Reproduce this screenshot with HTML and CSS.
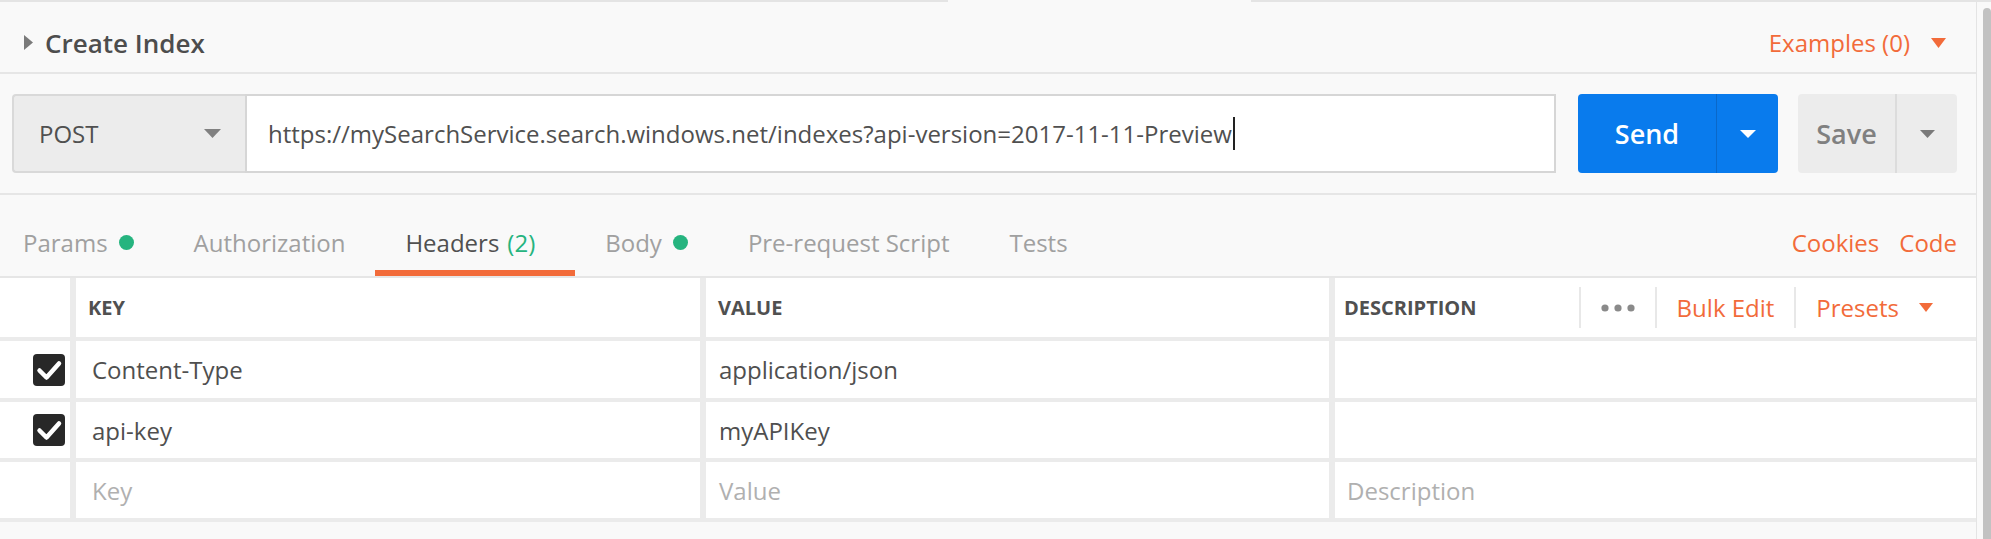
FILE: index.html
```html
<!DOCTYPE html>
<html>
<head>
<meta charset="utf-8">
<link rel="stylesheet" href="styles.css">
</head>
<body>
<div class="topline"><span class="seg seg-a"></span><span class="seg seg-gap"></span><span class="seg seg-b"></span></div>
<div class="layout">
  <div class="main">
    <div class="titlebar">
      <div class="title">
        <svg class="tri-right" width="9" height="15" viewBox="0 0 9 15"><path d="M0 0 L9 7.5 L0 15 Z" fill="#7a7a7a"/></svg>
        <span>Create Index</span>
      </div>
      <div class="examples">
        <span>Examples (0)</span>
        <svg width="15" height="10" viewBox="0 0 15 10"><path d="M0 0 H15 L7.5 10 Z" fill="#f26b3a"/></svg>
      </div>
    </div>

    <div class="request">
      <div class="method">
        <span>POST</span>
        <svg width="17" height="9" viewBox="0 0 17 9"><path d="M0 0 H17 L8.5 9 Z" fill="#808080"/></svg>
      </div>
      <div class="url"><span>https://mySearchService.search.windows.net/indexes?api-version=2017-11-11-Preview</span><span class="caret"></span></div>
      <div class="send">
        <span class="send-main">Send</span>
        <span class="send-drop"><svg width="16" height="8" viewBox="0 0 16 8"><path d="M0 0 H16 L8 8 Z" fill="#ffffff"/></svg></span>
      </div>
      <div class="save">
        <span class="save-main">Save</span>
        <span class="save-drop"><svg width="15" height="8" viewBox="0 0 15 8"><path d="M0 0 H15 L7.5 8 Z" fill="#7a7a7a"/></svg></span>
      </div>
    </div>

    <div class="tabs">
      <div class="tab-list">
        <div class="tab">Params<span class="dot"></span></div>
        <div class="tab">Authorization</div>
        <div class="tab active">Headers<span class="count">(2)</span></div>
        <div class="tab">Body<span class="dot"></span></div>
        <div class="tab">Pre-request Script</div>
        <div class="tab">Tests</div>
      </div>
      <div class="tab-links">
        <span>Cookies</span>
        <span>Code</span>
      </div>
    </div>

    <div class="table">
      <div class="cell check-cell"></div>
      <div class="cell head">KEY</div>
      <div class="cell head">VALUE</div>
      <div class="cell head desc-head">
        <span>DESCRIPTION</span>
        <div class="actions">
          <span class="sep"></span>
          <span class="action dots"><svg width="34" height="8" viewBox="0 0 34 8"><circle cx="4" cy="4" r="3.6" fill="#8a8a8a"/><circle cx="17" cy="4" r="3.6" fill="#8a8a8a"/><circle cx="30" cy="4" r="3.6" fill="#8a8a8a"/></svg></span>
          <span class="sep"></span>
          <span class="action link">Bulk Edit</span>
          <span class="sep"></span>
          <span class="action link presets">Presets<svg width="14" height="9" viewBox="0 0 14 9"><path d="M0 0 H14 L7 9 Z" fill="#f26b3a"/></svg></span>
        </div>
      </div>

      <div class="cell check-cell"><svg width="32" height="32" viewBox="0 0 32 32"><rect width="32" height="32" rx="4" fill="#282828"/><path d="M6.5 16.5 L13.5 23.5 L26 9.5" stroke="#ffffff" stroke-width="4.5" fill="none" stroke-linecap="round" stroke-linejoin="round"/></svg></div>
      <div class="cell key">Content-Type</div>
      <div class="cell val">application/json</div>
      <div class="cell"></div>

      <div class="cell check-cell"><svg width="32" height="32" viewBox="0 0 32 32"><rect width="32" height="32" rx="4" fill="#282828"/><path d="M6.5 16.5 L13.5 23.5 L26 9.5" stroke="#ffffff" stroke-width="4.5" fill="none" stroke-linecap="round" stroke-linejoin="round"/></svg></div>
      <div class="cell key">api-key</div>
      <div class="cell val">myAPIKey</div>
      <div class="cell"></div>

      <div class="cell check-cell"></div>
      <div class="cell key placeholder">Key</div>
      <div class="cell val placeholder">Value</div>
      <div class="cell placeholder">Description</div>
    </div>
  </div>
  <div class="scroll"><div class="thumb"></div></div>
</div>
</body>
</html>
```
FILE: styles.css
```css
html, body {
  margin: 0;
  padding: 0;
}
body {
  background: #f9f9f9;
  font-family: "Open Sans", "Noto Sans", sans-serif;
  color: #505050;
  width: 1991px;
  height: 539px;
  overflow: hidden;
}

.topline {
  display: flex;
  height: 2px;
}
.seg-a { width: 948px; background: #e4e4e4; }
.seg-gap { width: 303px; }
.seg-b { flex: 1; background: #e4e4e4; }

.layout {
  display: flex;
  height: 537px;
}
.main {
  width: 1977px;
  flex: none;
  box-sizing: border-box;
  border-right: 1px solid #e4e4e4;
}
.scroll {
  flex: 1;
  display: flex;
  padding: 6px 0 0 6px;
  box-sizing: border-box;
}
.thumb {
  width: 8px;
  background: #c2c2c2;
  border-radius: 4px 4px 0 0;
}

/* title bar */
.titlebar {
  height: 72px;
  box-sizing: border-box;
  padding: 11px 30px 0 24px;
  display: flex;
  align-items: center;
  justify-content: space-between;
  border-bottom: 2px solid #e6e6e6;
}
.title {
  display: flex;
  align-items: center;
  gap: 12px;
  font-size: 26px;
  font-weight: 600;
  color: #4d4d4d;
}
.examples {
  display: flex;
  align-items: center;
  gap: 21px;
  font-size: 24px;
  color: #f26b3a;
}

/* request bar */
.request {
  display: flex;
  padding: 20px 19px 20px 12px;
  border-bottom: 2px solid #e6e6e6;
}
.method {
  width: 233px;
  height: 79px;
  box-sizing: border-box;
  background: #ececec;
  border: 2px solid #d9d9d9;
  border-right: none;
  border-radius: 4px 0 0 4px;
  padding: 0 24px 0 25px;
  display: flex;
  align-items: center;
  justify-content: space-between;
  font-size: 24px;
  color: #505050;
}
.url {
  flex: 1;
  height: 79px;
  box-sizing: border-box;
  background: #ffffff;
  border: 2px solid #d6d6d6;
  padding-left: 21px;
  display: flex;
  align-items: center;
  font-size: 24px;
  color: #505050;
  margin-right: 22px;
}
.caret {
  display: inline-block;
  width: 2px;
  height: 33px;
  background: #222;
  margin-left: 1px;
}
.send {
  width: 200px;
  height: 79px;
  border-radius: 4px;
  background: #097bed;
  display: flex;
  color: #ffffff;
  font-size: 27px;
  font-weight: 600;
  margin-right: 20px;
}
.send-main {
  width: 139px;
  box-sizing: border-box;
  border-right: 1px solid #0a68c9;
  display: flex;
  align-items: center;
  justify-content: center;
}
.send-drop, .save-drop {
  flex: 1;
  display: flex;
  align-items: center;
  justify-content: center;
}
.save {
  width: 159px;
  height: 79px;
  border-radius: 4px;
  background: #ececec;
  display: flex;
  color: #808080;
  font-size: 27px;
  font-weight: 600;
}
.save-main {
  width: 99px;
  box-sizing: border-box;
  border-right: 2px solid #dcdcdc;
  display: flex;
  align-items: center;
  justify-content: center;
}

/* tabs */
.tabs {
  display: flex;
  justify-content: space-between;
  border-bottom: 2px solid #e6e6e6;
  padding-right: 19px;
}
.tab-list {
  display: flex;
}
.tab {
  height: 81px;
  box-sizing: border-box;
  padding: 14px 30px 0;
  display: flex;
  align-items: center;
  font-size: 24px;
  color: #a0a0a0;
}
.tab:first-child {
  padding-left: 23px;
}
.tab.active {
  color: #505050;
  box-shadow: inset 0 -6px 0 #f26b3a;
  padding-right: 40px;
}
.count {
  color: #26b47f;
  margin-left: 8px;
}
.dot {
  width: 15px;
  height: 15px;
  border-radius: 50%;
  background: #26b47f;
  margin-left: 11px;
}
.tab-links {
  display: flex;
  align-items: center;
  padding-top: 14px;
  gap: 20px;
  font-size: 24px;
  color: #f26b3a;
}

/* table */
.table {
  display: grid;
  grid-template-columns: 70px 624px 623px 1fr;
  grid-template-rows: 59px 57px 56px 56px;
  column-gap: 6px;
  row-gap: 4px;
  padding-bottom: 4px;
  background: #ebebeb;
}
.cell {
  background: #ffffff;
  display: flex;
  align-items: center;
  padding-left: 12px;
  font-size: 24px;
  color: #4f4f4f;
  min-width: 0;
}
.cell.key {
  padding-left: 16px;
}
.cell.val {
  padding-left: 13px;
}
.check-cell {
  padding-left: 0;
  justify-content: flex-end;
  padding-right: 5px;
}
.head {
  font-size: 20px;
  font-weight: 700;
  color: #505050;
}
.desc-head {
  padding-left: 9px;
}
.actions {
  margin-left: auto;
  display: flex;
  align-items: center;
  font-weight: 400;
  font-size: 24px;
}
.sep {
  width: 2px;
  height: 41px;
  background: #e8e8e8;
}
.action {
  display: flex;
  align-items: center;
  padding: 0 20px;
}
.link {
  color: #f26b3a;
}
.presets {
  gap: 20px;
  padding-right: 43px;
}
.placeholder {
  color: #b0b0b0;
}
```
